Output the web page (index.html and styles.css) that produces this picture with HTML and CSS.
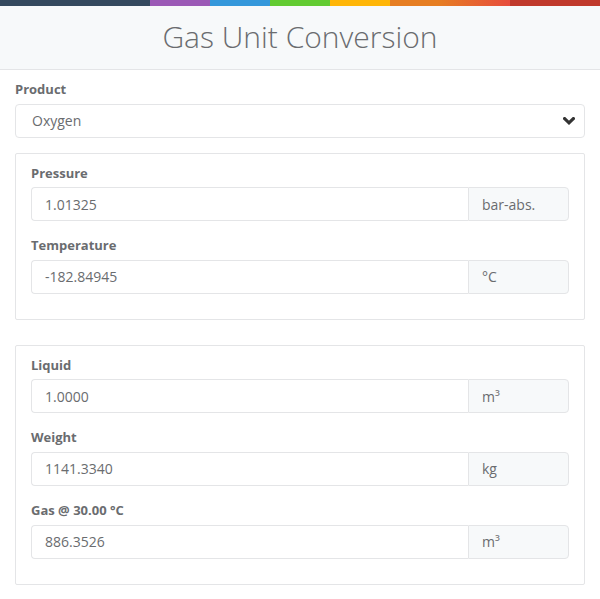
FILE: index.html
```html
<!DOCTYPE html>
<html>
<head>
<meta charset="utf-8">
<link rel="stylesheet" href="styles.css">
</head>
<body>
<div class="color-line">
  <span class="c1"></span><span class="c2"></span><span class="c3"></span><span class="c4"></span><span class="c5"></span><span class="c6"></span><span class="c7"></span>
</div>
<header class="header">
  <h1 class="title">Gas Unit Conversion</h1>
</header>
<main class="content">
  <div class="form-group">
    <label class="label">Product</label>
    <div class="select">
      <span>Oxygen</span>
      <svg class="chev" width="12" height="8" viewBox="0 0 12 8"><path d="M1.6 1.6 L6 5.8 L10.4 1.6" fill="none" stroke="#333" stroke-width="3.2" stroke-linecap="square" stroke-linejoin="miter"/></svg>
    </div>
  </div>
  <section class="panel">
    <div class="form-group">
      <label class="label">Pressure</label>
      <div class="input-group"><div class="input">1.01325</div><div class="addon">bar-abs.</div></div>
    </div>
    <div class="form-group">
      <label class="label">Temperature</label>
      <div class="input-group"><div class="input">-182.84945</div><div class="addon">°C</div></div>
    </div>
  </section>
  <section class="panel">
    <div class="form-group">
      <label class="label">Liquid</label>
      <div class="input-group"><div class="input">1.0000</div><div class="addon">m³</div></div>
    </div>
    <div class="form-group">
      <label class="label">Weight</label>
      <div class="input-group"><div class="input">1141.3340</div><div class="addon">kg</div></div>
    </div>
    <div class="form-group">
      <label class="label">Gas @ 30.00 °C</label>
      <div class="input-group"><div class="input">886.3526</div><div class="addon">m³</div></div>
    </div>
  </section>
</main>
</body>
</html>
```
FILE: styles.css
```css
* { box-sizing: border-box; }
html, body { margin: 0; padding: 0; background: #fff; }
body { font-family: "Open Sans", "Liberation Sans", sans-serif; color: #6a6c6f; font-size: 14px; }
.color-line { display: flex; height: 6px; }
.color-line span { display: block; height: 6px; }
.c1 { width: 150px; background: #34495e; }
.c2 { width: 60px; background: #9b59b6; }
.c3 { width: 60px; background: #3498db; }
.c4 { width: 60px; background: #62cb31; }
.c5 { width: 60px; background: #ffb606; }
.c6 { width: 120px; background: linear-gradient(to right, #e67e22 0%, #e67e22 40%, #e74c3c 100%); }
.c7 { flex: 1; background: #c0392b; }
.header { background: #f7f9fa; border-bottom: 1px solid #e4e5e7; height: 64px; display: flex; align-items: center; justify-content: center; }
.title { margin: 0; font-weight: 300; font-size: 30px; color: #6a6c6f; line-height: 1; position: relative; top: -1px; }
.content { padding: 10px 15px 0; }
.form-group { margin-bottom: 15px; }
.label { display: block; font-weight: 700; font-size: 13px; line-height: 18.6px; margin-bottom: 5px; color: #6a6c6f; }
.select { height: 34px; border: 1px solid #e4e5e7; border-radius: 4px; display: flex; align-items: center; justify-content: space-between; padding: 0 9px 0 16px; }
.chev { display: block; }
.panel { border: 1px solid #e4e5e7; border-radius: 2px; padding: 10px 15px; margin-bottom: 25px; }
.input-group { display: flex; height: 34px; }
.input { flex: 1; border: 1px solid #e4e5e7; border-right: none; border-radius: 4px 0 0 4px; display: flex; align-items: center; padding: 0 13px; }
.addon { flex: 0 0 101px; background: #f7f9fa; border: 1px solid #e4e5e7; border-radius: 0 4px 4px 0; display: flex; align-items: center; padding: 0 13px; }
```
